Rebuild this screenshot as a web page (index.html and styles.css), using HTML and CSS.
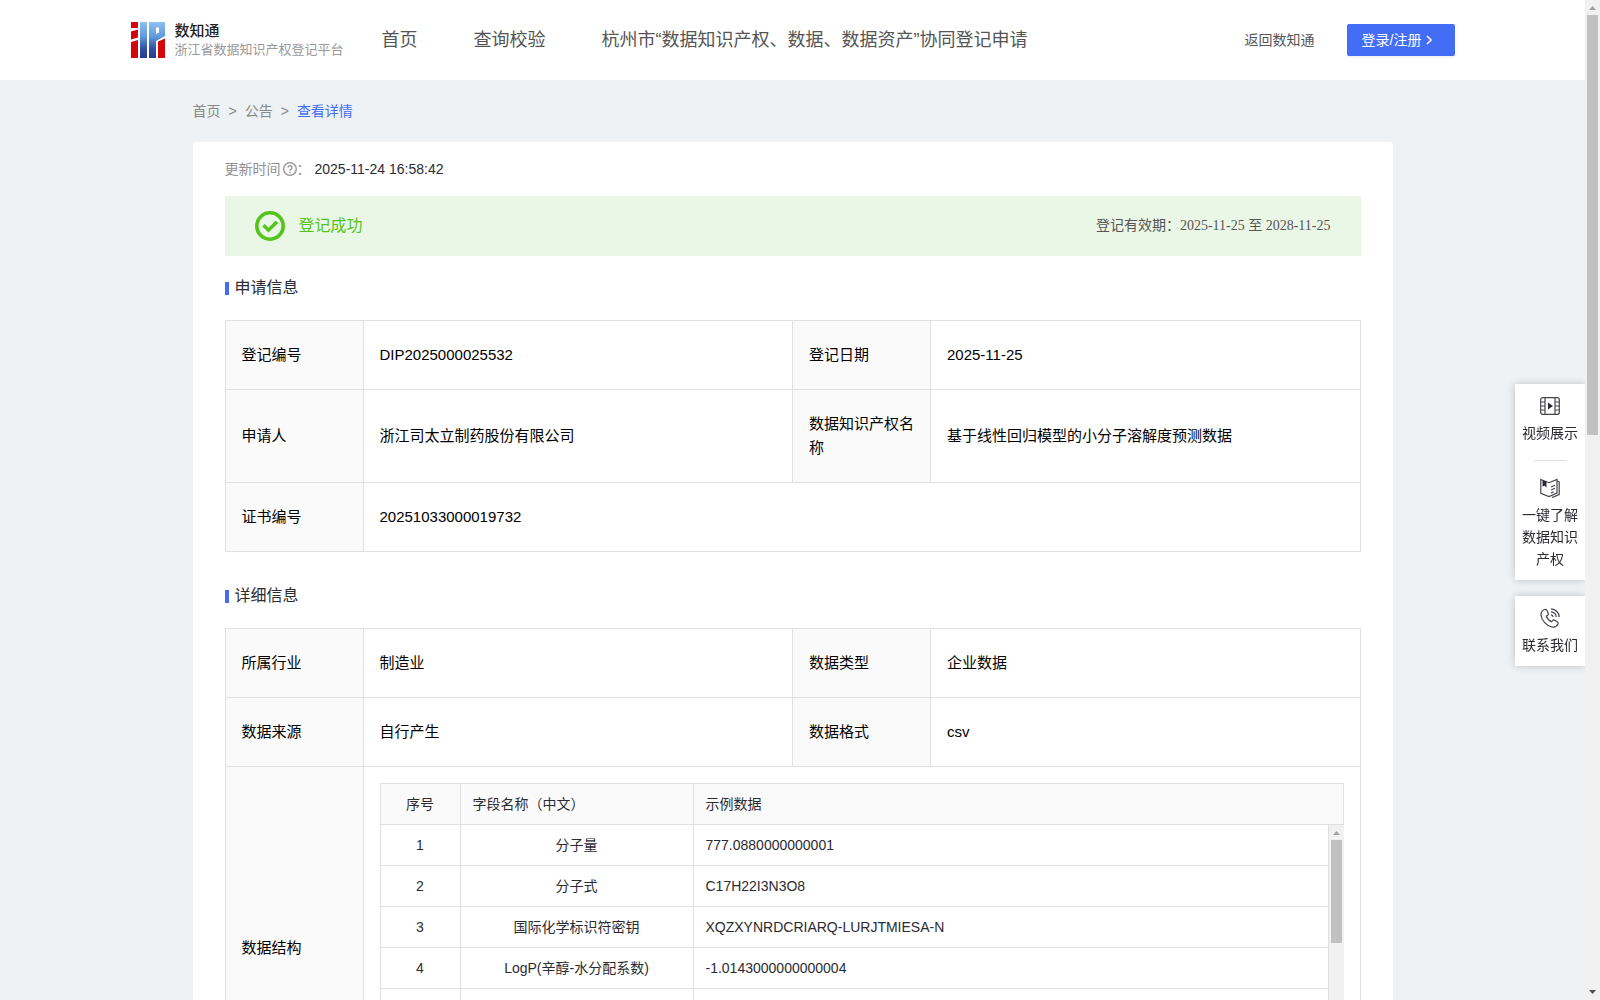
FILE: index.html
```html
<!DOCTYPE html>
<html lang="zh-CN">
<head>
  <meta charset="UTF-8">
  <title>数知通 - 查看详情</title>
  <link rel="stylesheet" href="styles.css">
</head>
<body>
  <div class="page">
    <header class="header">
      <div class="header-inner">
        <a class="logo" href="#">
          <svg class="logo-mark" viewBox="0 0 34 36" aria-hidden="true">
            <defs>
              <linearGradient id="blue" x1="0" y1="0" x2="0" y2="1">
                <stop offset="0" stop-color="#8fc0ee"/>
                <stop offset="0.4" stop-color="#5f9bdc"/>
                <stop offset="0.75" stop-color="#2f4fa0"/>
                <stop offset="1" stop-color="#283c8c"/>
              </linearGradient>
            </defs>
            <path fill="#d4060b" d="M0 0h7v6H0zM0 9.500l7-2v8l-7 2zM0 20l7-2v18H0zM27 19.500l7-3V36h-7z"/>
            <path fill="url(#blue)" d="M9 0h7v36H9zM18 0h16v14l-9 5v17h-7zM25 5.500v6.500l3-1.500V5.500z" fill-rule="evenodd"/>
          </svg>
          <span class="logo-text">
            <strong>数知通</strong>
            <small>浙江省数据知识产权登记平台</small>
          </span>
        </a>
        <nav class="nav">
          <a href="#">首页</a>
          <a href="#">查询校验</a>
          <a href="#">杭州市“数据知识产权、数据、数据资产”协同登记申请</a>
        </nav>
        <a class="back" href="#">返回数知通</a>
        <button class="login" type="button">登录/注册
          <svg viewBox="0 0 8 10" aria-hidden="true"><path d="M2 1l4 4-4 4" fill="none" stroke="#fff" stroke-width="1.500"/></svg>
        </button>
      </div>
    </header>

    <main class="main">
      <nav class="crumbs">
        <a href="#">首页</a><span>&gt;</span><a href="#">公告</a><span>&gt;</span><a class="current" href="#">查看详情</a>
      </nav>

      <div class="card">
        <div class="update">
          <span class="update-label">更新时间<svg viewBox="0 0 14 14" aria-hidden="true"><circle cx="7" cy="7" r="6.300"/><path d="M5 5.600a2 2 0 1 1 2.900 1.800c-.6.300-.9.600-.9 1.300M7 9.700v1.200"/></svg>：</span>
          <span>2025-11-24 16:58:42</span>
        </div>

        <div class="status">
          <svg class="status-icon" viewBox="0 0 30 30" aria-hidden="true"><circle cx="15" cy="15" r="13.200" stroke-width="3.600"/><path d="M8.500 14.200l5 5 8.500-8.500" stroke-width="3.400"/></svg>
          <span class="status-text">登记成功</span>
          <span class="valid">登记有效期：<span>2025-11-25 至 2028-11-25</span></span>
        </div>

        <h2 class="title">申请信息</h2>
        <table class="info">
          <colgroup><col class="col-label"><col><col class="col-label"><col></colgroup>
          <tr>
            <th>登记编号</th><td>DIP2025000025532</td>
            <th>登记日期</th><td>2025-11-25</td>
          </tr>
          <tr>
            <th>申请人</th><td>浙江司太立制药股份有限公司</td>
            <th>数据知识产权名称</th><td>基于线性回归模型的小分子溶解度预测数据</td>
          </tr>
          <tr>
            <th>证书编号</th><td colspan="3">20251033000019732</td>
          </tr>
        </table>

        <h2 class="title">详细信息</h2>
        <table class="info">
          <colgroup><col class="col-label"><col><col class="col-label"><col></colgroup>
          <tr>
            <th>所属行业</th><td>制造业</td>
            <th>数据类型</th><td>企业数据</td>
          </tr>
          <tr>
            <th>数据来源</th><td>自行产生</td>
            <th>数据格式</th><td>csv</td>
          </tr>
          <tr>
            <th>数据结构</th>
            <td class="struct" colspan="3">
              <div class="fields">
                <table>
                  <colgroup><col class="col-no"><col class="col-name"><col></colgroup>
                  <tr><th>序号</th><th>字段名称（中文）</th><th>示例数据</th></tr>
                </table>
                <div class="fields-scroll">
                  <div class="fields-body">
                    <table>
                      <colgroup><col class="col-no"><col class="col-name"><col></colgroup>
                      <tr><td>1</td><td>分子量</td><td>777.0880000000001</td></tr>
                      <tr><td>2</td><td>分子式</td><td>C17H22I3N3O8</td></tr>
                      <tr><td>3</td><td>国际化学标识符密钥</td><td>XQZXYNRDCRIARQ-LURJTMIESA-N</td></tr>
                      <tr><td>4</td><td>LogP(辛醇-水分配系数)</td><td>-1.0143000000000004</td></tr>
                      <tr><td></td><td></td><td></td></tr>
                      <tr><td></td><td></td><td></td></tr>
                      <tr><td></td><td></td><td></td></tr>
                    </table>
                  </div>
                  <div class="scrollbar" aria-hidden="true">
                    <svg class="arrow-up" viewBox="0 0 15 15"><path d="M4 10l3.500-4 3.500 4z"/></svg>
                    <div class="thumb thumb-fields"></div>
                    <svg class="arrow-down" viewBox="0 0 15 15"><path d="M4 5l3.500 4L11 5z"/></svg>
                  </div>
                </div>
              </div>
            </td>
          </tr>
        </table>
      </div>
    </main>
  </div>

  <div class="scrollbar" aria-hidden="true">
    <svg class="arrow-up" viewBox="0 0 15 15"><path d="M4 10l3.500-4 3.500 4z"/></svg>
    <div class="thumb thumb-page"></div>
    <svg class="arrow-down" viewBox="0 0 15 15"><path d="M4 5l3.500 4L11 5z"/></svg>
  </div>

  <aside class="side">
    <div class="side-box">
      <a href="#">
        <svg viewBox="0 0 20 20" aria-hidden="true"><rect x="0.700" y="1.700" width="18.600" height="16.600" rx="2"/><path d="M5 2v16M15 2v16M1 6h4M1 10h4M1 14h4M15 6h4M15 10h4M15 14h4"/><path class="fill" d="M8 6.500l5 3.500-5 3.500z"/></svg>
        视频展示
      </a>
      <hr>
      <a href="#">
        <svg viewBox="0 0 20 20" aria-hidden="true"><path d="M.8 1.500l8.200 3.200 8-3.200v13.500l-8 3.500-8.200-3.200zM17 3l2.200.800v12.700L12 19.500M11 9l4-1.800M11 12l4-1.800M11 15l2.500-1.100"/><path class="fill" d="M2.500 2.200l4 1.400v6l-2-1.800-2 .6z"/></svg>
        一键了解数据知识产权
      </a>
    </div>
    <div class="side-box">
      <a href="#">
        <svg viewBox="0 0 20 20" aria-hidden="true"><path d="M4.500 1.500C2 2.500.8 4.500 1 7c.5 5.500 5.500 11 11 12 2.500.4 5-.7 6-3 .3-.8 0-1.600-.6-2.100l-2.600-1.700c-.8-.5-1.700-.3-2.300.4l-1 1.200C9.500 13 7.200 10.500 6.300 8.300l1.300-1c.7-.6.9-1.500.5-2.300L6.800 2.300c-.5-.9-1.400-1.200-2.300-.8z"/><path d="M11 .8c4.500.2 8 3.700 8.200 8.200M11 3.800c2.800.2 5 2.400 5.200 5.200M11 6.800c1.200.2 2 1 2.200 2.200"/></svg>
        联系我们
      </a>
    </div>
  </aside>
</body>
</html>
```
FILE: styles.css
```css
* {
  box-sizing: border-box;
}
body {
  display: flex;
  height: 100vh;
  margin: 0;
  overflow: hidden;
  background: #eef2f5;
  color: #2b2b33;
  font-family: "Liberation Sans", "Noto Sans CJK SC", sans-serif;
  font-size: 14px;
  line-height: 22px;
}
a {
  color: inherit;
  text-decoration: none;
}
.page {
  flex: 1;
  min-width: 0;
  overflow-y: auto;
  scrollbar-width: none;
}

/* header */
.header {
  background: #fff;
  color: #555;
}
.header-inner {
  display: flex;
  align-items: center;
  max-width: 1324px;
  height: 80px;
  margin: 0 auto;
}
.logo {
  display: flex;
  gap: 10px;
  align-items: center;
}
.logo-mark {
  width: 34px;
  height: 36px;
}
.logo-text {
  display: flex;
  flex-direction: column;
}
.logo-text strong {
  color: #222;
  font-size: 15px;
  font-weight: 500;
  line-height: 20px;
}
.logo-text small {
  color: #999;
  font-size: 13px;
  line-height: 18px;
}
.nav {
  display: flex;
  flex: 1;
  gap: 56px;
  margin-left: 38px;
  font-size: 18px;
}
.back {
  margin-right: 32px;
}
.login {
  display: flex;
  align-items: center;
  gap: 4px;
  width: 108px;
  height: 32px;
  padding: 0 15px;
  border: 0;
  border-radius: 2px;
  background: #446df6;
  box-shadow: 0 2px 0 rgba(0, 0, 0, 0.045);
  color: #fff;
  font: inherit;
  white-space: nowrap;
  cursor: pointer;
}
.login svg {
  width: 8px;
  height: 10px;
}

/* page */
.main {
  max-width: 1200px;
  margin: 0 auto;
}
.crumbs {
  display: flex;
  gap: 8px;
  padding: 20px 0;
  color: #888;
}
.crumbs .current {
  color: #446df6;
}
.card {
  padding: 16px 32px 32px;
  border-radius: 4px;
  background: #fff;
}
.update {
  display: flex;
  gap: 4px;
}
.update-label {
  display: flex;
  align-items: center;
  color: #909096;
}
.update-label svg {
  width: 14px;
  height: 14px;
  margin-left: 2px;
  fill: none;
  stroke: #909096;
  stroke-width: 1.3;
}
.status {
  display: flex;
  align-items: center;
  height: 60px;
  margin-top: 16px;
  padding: 0 30px;
  background: #ebf7e6;
}
.status-icon {
  width: 30px;
  height: 30px;
  fill: none;
  stroke: #52c41a;
}
.status-text {
  flex: 1;
  margin-left: 14px;
  color: #52c41a;
  font-size: 16px;
}
.valid {
  color: #555;
  font-family: "Liberation Serif", "Noto Sans CJK SC", serif;
}
.title {
  display: flex;
  align-items: center;
  gap: 6px;
  margin: 20px 0;
  font-size: 16px;
  font-weight: 400;
  line-height: 24px;
}
.title::before {
  content: "";
  width: 4px;
  height: 13px;
  background: #446df6;
}

/* tables */
table {
  width: 100%;
  border-collapse: collapse;
  table-layout: fixed;
}
th,
td {
  border: 1px solid #e0e0e0;
  font-weight: 400;
  text-align: left;
}
th {
  background: #fafafa;
}
.info {
  color: #000;
  font-size: 15px;
  line-height: 24px;
}
.info + .title {
  margin-top: 32px;
}
.info th,
.info td {
  padding: 22px 16px;
}
.col-label {
  width: 138px;
}
.info .struct {
  padding: 16px;
}
.fields {
  color: #2b2b33;
  font-size: 14px;
  line-height: 22px;
}
.col-no {
  width: 80px;
}
.col-name {
  width: 233px;
}
.fields th,
.fields td {
  height: 41px;
  padding: 9px 12px;
}
.fields th:first-child,
.fields td:first-child,
.fields td:nth-child(2) {
  text-align: center;
}
.fields-scroll {
  display: flex;
  height: 287px;
}
.fields-body {
  flex: 1;
  overflow: hidden;
}
.fields-body tr:first-child td {
  height: 40px;
  border-top: 0;
}

/* scrollbars */
.scrollbar {
  display: flex;
  flex-direction: column;
  width: 15px;
  background: #f1f1f1;
}
.scrollbar svg {
  width: 15px;
  height: 15px;
}
.arrow-up {
  fill: #a3a3a3;
}
.arrow-down {
  margin-top: auto;
  fill: #505050;
}
.thumb {
  margin: 0 2px;
  background: #c1c1c1;
}
.thumb-fields {
  height: 36%;
}
.thumb-page {
  height: 42%;
}

/* floating side menu */
.side {
  position: fixed;
  top: 384px;
  right: 15px;
  display: flex;
  flex-direction: column;
  gap: 16px;
  width: 70px;
  clip-path: inset(-10px 0 -10px -10px);
}
.side-box {
  padding: 12px 7px 10px;
  background: #fff;
  box-shadow: 0 0 8px rgba(0, 0, 0, 0.2);
  text-align: center;
}
.side-box svg {
  display: block;
  width: 20px;
  height: 20px;
  margin: 0 auto 6px;
  fill: none;
  stroke: #44444c;
  stroke-width: 1.2;
}
.side-box .fill {
  fill: #2b2b33;
  stroke: none;
}
.side-box hr {
  width: 32px;
  margin: 16px auto 17px;
  border: 0;
  border-top: 1px solid #ddd;
}
```
